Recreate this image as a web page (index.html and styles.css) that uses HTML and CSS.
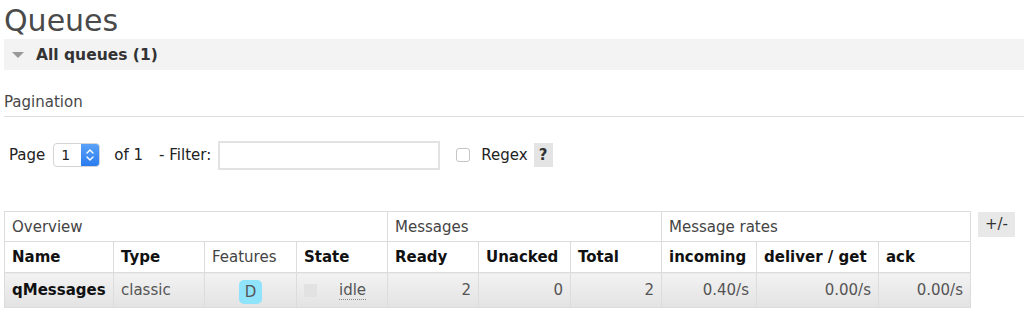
FILE: index.html
```html
<html>
<head>
    <title>Queues</title>
    <link rel="stylesheet" href="styles.css">
</head>
<body>
<div class="main">
    <h1>Queues</h1>
    <div class="section-toggle">
        <span class="arrow"></span>
        <span class="toggle-title">All queues (1)</span>
    </div>

    <div class="pagination">
        <h3>Pagination</h3>
        <div class="pager-row">
            <span class="label">Page</span>
            <span class="select">
                <span class="select-value">1</span>
                <span class="select-btn">
                    <svg width="10" height="16" viewBox="0 0 10 16">
                        <path d="M2 6 L5 3 L8 6 M2 10 L5 13 L8 10" fill="none" stroke="#fff" stroke-width="1.4" stroke-linecap="round" stroke-linejoin="round"/>
                    </svg>
                </span>
            </span>
            <span class="label of">of 1</span>
            <span class="label filter">- Filter:</span>
            <span class="filter-input"></span>
            <span class="checkbox"></span>
            <span class="label regex">Regex</span>
            <span class="help">?</span>
        </div>
    </div>

    <div class="table-wrap">
        <table class="list">
            <colgroup>
                <col style="width:109px">
                <col style="width:91px">
                <col style="width:92px">
                <col style="width:91px">
                <col style="width:91px">
                <col style="width:92px">
                <col style="width:91px">
                <col style="width:95px">
                <col style="width:122px">
                <col style="width:92px">
            </colgroup>
            <thead>
            <tr class="group">
                <th colspan="4">Overview</th>
                <th colspan="3">Messages</th>
                <th colspan="3">Message rates</th>
            </tr>
            <tr class="cols">
                <th>Name</th>
                <th>Type</th>
                <th class="plain">Features</th>
                <th>State</th>
                <th>Ready</th>
                <th>Unacked</th>
                <th>Total</th>
                <th>incoming</th>
                <th>deliver / get</th>
                <th>ack</th>
            </tr>
            </thead>
            <tbody>
            <tr class="alt1">
                <td class="name">qMessages</td>
                <td>classic</td>
                <td class="c"><span class="badge">D</span></td>
                <td><span class="state"><span class="state-box"></span><span class="idle">idle</span></span></td>
                <td class="r">2</td>
                <td class="r">0</td>
                <td class="r">2</td>
                <td class="r">0.40/s</td>
                <td class="r">0.00/s</td>
                <td class="r">0.00/s</td>
            </tr>
            </tbody>
        </table>
        <span class="toggle-cols">+/-</span>
    </div>
</div>
</body>
</html>
```

FILE: styles.css
```css
body {
    margin: 0;
    font-family: 'DejaVu Sans', Verdana, sans-serif;
    color: #484848;
    background: #ffffff;
}

.main {
    padding: 0 0 0 4px;
}

h1 {
    margin: 0;
    padding-top: 2px;
    font-size: 30px;
    font-weight: normal;
    line-height: 37px;
    color: #4a4a4a;
}

.section-toggle {
    display: flex;
    align-items: center;
    height: 31px;
    background: #f3f3f3;
}

.section-toggle .arrow {
    width: 0;
    height: 0;
    margin: 0 12px 0 8px;
    border-left: 6px solid transparent;
    border-right: 6px solid transparent;
    border-top: 6px solid #999999;
}

.toggle-title {
    font-size: 15.5px;
    font-weight: bold;
    color: #333333;
}

.pagination h3 {
    margin: 23px 0 0;
    padding-bottom: 4px;
    font-size: 15px;
    font-weight: normal;
    line-height: 19px;
    color: #484848;
    border-bottom: 1px solid #dddddd;
}

.pager-row {
    display: flex;
    align-items: center;
    height: 28px;
    margin-top: 24px;
    padding-left: 5px;
    font-size: 15px;
    color: #222222;
}

.select {
    display: flex;
    height: 24px;
    margin-left: 8px;
    border: 1px solid #d4d4d4;
    border-radius: 4px;
    overflow: hidden;
    box-sizing: border-box;
}

.select-value {
    width: 27px;
    padding-left: 7px;
    font-size: 14px;
    line-height: 22px;
    box-sizing: border-box;
}

.select-btn {
    display: flex;
    align-items: center;
    justify-content: center;
    width: 18px;
    background: linear-gradient(#5aa2f8, #2a7bef);
}

.of {
    margin-left: 14px;
}

.filter {
    margin-left: 16px;
}

.filter-input {
    width: 218px;
    height: 25px;
    margin-left: 7px;
    border: 2px solid #e2e2e2;
    background: #ffffff;
}

.checkbox {
    width: 12px;
    height: 12px;
    margin-left: 16px;
    border: 1px solid #c4c4c4;
    border-radius: 3px;
}

.regex {
    margin-left: 11px;
}

.help {
    width: 19px;
    height: 24px;
    margin-left: 6px;
    background: #e4e4e4;
    text-align: center;
    line-height: 24px;
    font-weight: bold;
    color: #333333;
}

.table-wrap {
    display: flex;
    align-items: flex-start;
    margin-top: 42px;
}

.list {
    table-layout: fixed;
    border-collapse: collapse;
    font-size: 15px;
}

.list th, .list td {
    border: 1px solid #dcdcdc;
    padding: 0 7px;
    text-align: left;
    white-space: nowrap;
    overflow: hidden;
}

.list .group th {
    height: 30px;
    font-weight: normal;
    color: #444444;
}

.list .cols th {
    height: 31px;
    font-weight: bold;
    color: #111111;
}

.list .cols th.plain {
    font-weight: normal;
    color: #444444;
}

.list .alt1 td {
    height: 35px;
    color: #555555;
    background: linear-gradient(#f2f2f2, #e3e3e3);
}

.list td.name {
    font-weight: bold;
    color: #111111;
}

.list td.r {
    text-align: right;
}

.list td.c {
    text-align: center;
}

.badge {
    display: inline-block;
    width: 23px;
    height: 24px;
    margin-top: 4px;
    border-radius: 5px;
    background: #8fe3fb;
    line-height: 24px;
    text-align: center;
    color: #555555;
}

.state {
    display: flex;
    align-items: center;
}

.state-box {
    width: 13px;
    height: 13px;
    margin-right: 22px;
    background: #e2e2e2;
}

.idle {
    border-bottom: 1px dotted #888888;
    line-height: 18px;
}

.toggle-cols {
    margin: 1px 0 0 7px;
    padding: 0 7px;
    height: 25px;
    line-height: 25px;
    background: #e8e8e8;
    font-size: 15px;
    color: #333333;
}
```
